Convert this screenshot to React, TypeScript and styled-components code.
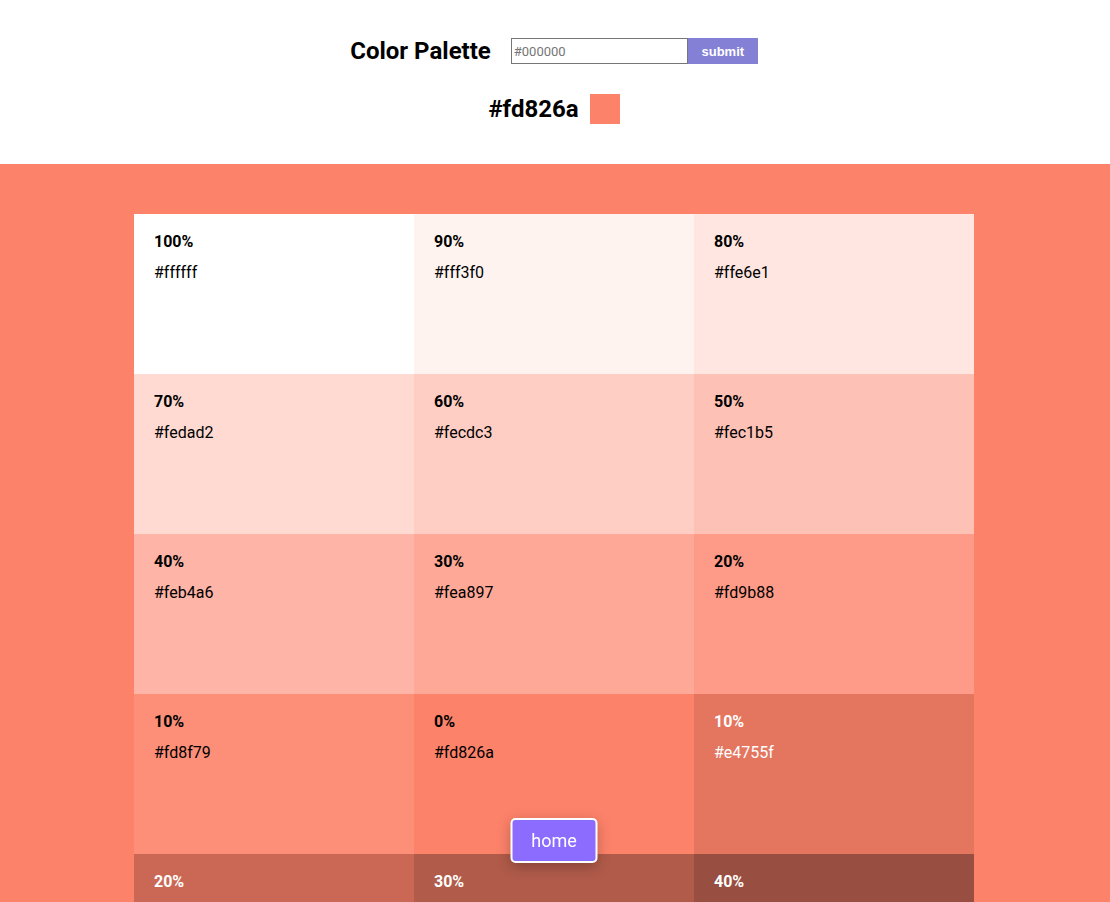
import { FC } from "react"
import styled, { createGlobalStyle } from "styled-components"

const BASE = "#fd826a"

const GlobalStyle = createGlobalStyle`
  * {
    box-sizing: border-box;
  }
  body {
    margin: 0;
    font-family: Roboto, "Liberation Sans", sans-serif;
    background: #ffffff;
  }
  #root {
    width: calc(100% - 2px);
  }
`

const hex = (rgb: number[]) =>
  "#" + rgb.map((v) => Math.round(v).toString(16).padStart(2, "0")).join("")

const parse = (h: string) => [
  parseInt(h.slice(1, 3), 16),
  parseInt(h.slice(3, 5), 16),
  parseInt(h.slice(5, 7), 16),
]

interface IShade {
  weight: number
  color: string
  dark: boolean
}

const buildShades = (base: string): IShade[] => {
  const rgb = parse(base)
  const tints: IShade[] = []
  for (let w = 100; w >= 10; w -= 10) {
    tints.push({
      weight: w,
      color: hex(rgb.map((v) => v + (255 - v) * (w / 100))),
      dark: false,
    })
  }
  const shades: IShade[] = []
  for (let w = 10; w <= 100; w += 10) {
    shades.push({
      weight: w,
      color: hex(rgb.map((v) => v * (1 - w / 100))),
      dark: true,
    })
  }
  return [...tints, { weight: 0, color: base, dark: false }, ...shades]
}

const Header = styled.header`
  display: flex;
  flex-direction: column;
  align-items: center;
  padding: 37px 0 40px;
  gap: 29px;
`

const TopRow = styled.div`
  display: flex;
  align-items: center;
  gap: 20px;
`

const Title = styled.h3`
  margin: 0;
  font-size: 24px;
  line-height: 28px;
  font-weight: 700;
  color: #000;
`

const Form = styled.form`
  display: flex;
`

const Input = styled.input`
  width: 177px;
  height: 26px;
  border: 1px solid #767676;
  padding: 0 2px;
  font-family: Roboto, sans-serif;
  font-size: 13px;
  outline: none;
  &::placeholder {
    color: #757575;
  }
`

const Submit = styled.button`
  width: 70px;
  height: 26px;
  border: none;
  background: #8480d6;
  color: #fff;
  font-family: "Liberation Sans", Arial, sans-serif;
  font-weight: 700;
  font-size: 13px;
  cursor: pointer;
`

const CurrentRow = styled.div`
  display: flex;
  align-items: center;
  gap: 11px;
`

const CurrentHex = styled.h3`
  margin: 0;
  font-size: 24px;
  line-height: 28px;
  font-weight: 700;
  color: #000;
`

const Swatch = styled.div<{ $color: string }>`
  width: 30px;
  height: 30px;
  background: ${({ $color }) => $color};
`

const Section = styled.section<{ $color: string }>`
  background: ${({ $color }) => $color};
  margin-right: -2px;
  padding: 50px 2px 50px 0;
  display: flex;
  justify-content: center;
`

const Grid = styled.div`
  display: grid;
  grid-template-columns: repeat(3, 280px);
  grid-auto-rows: 160px;
`

const Cell = styled.article<{ $color: string; $dark: boolean }>`
  background: ${({ $color }) => $color};
  color: ${({ $dark }) => ($dark ? "#ffffff" : "#000000")};
  padding: 19px 20px;
`

const Percent = styled.p`
  margin: 0 0 12px;
  font-size: 16px;
  font-weight: 700;
  line-height: 18px;
`

const HexText = styled.p`
  margin: 0;
  font-size: 16px;
  line-height: 20px;
`

const HomeButton = styled.button`
  position: fixed;
  left: calc(50% - 1px);
  bottom: 39px;
  transform: translateX(-50%);
  width: 87px;
  height: 45px;
  border: 2px solid #ffffff;
  border-radius: 5px;
  background: #8c6cff;
  color: #ffffff;
  font-family: Roboto, sans-serif;
  font-size: 18px;
  box-shadow: 0 4px 14px rgba(0, 0, 0, 0.25);
  cursor: pointer;
`

const App: FC = () => {
  const shades = buildShades(BASE)
  return (
    <>
      <GlobalStyle />
      <Header>
        <TopRow>
          <Title>Color Palette</Title>
          <Form onSubmit={(e) => e.preventDefault()}>
            <Input type="text" placeholder="#000000" />
            <Submit type="submit">submit</Submit>
          </Form>
        </TopRow>
        <CurrentRow>
          <CurrentHex>{BASE}</CurrentHex>
          <Swatch $color={BASE} />
        </CurrentRow>
      </Header>
      <Section $color={BASE}>
        <Grid>
          {shades.map((s, i) => (
            <Cell key={i} $color={s.color} $dark={s.dark}>
              <Percent>{s.weight}%</Percent>
              <HexText>{s.color}</HexText>
            </Cell>
          ))}
        </Grid>
      </Section>
      <HomeButton>home</HomeButton>
    </>
  )
}

export default App
